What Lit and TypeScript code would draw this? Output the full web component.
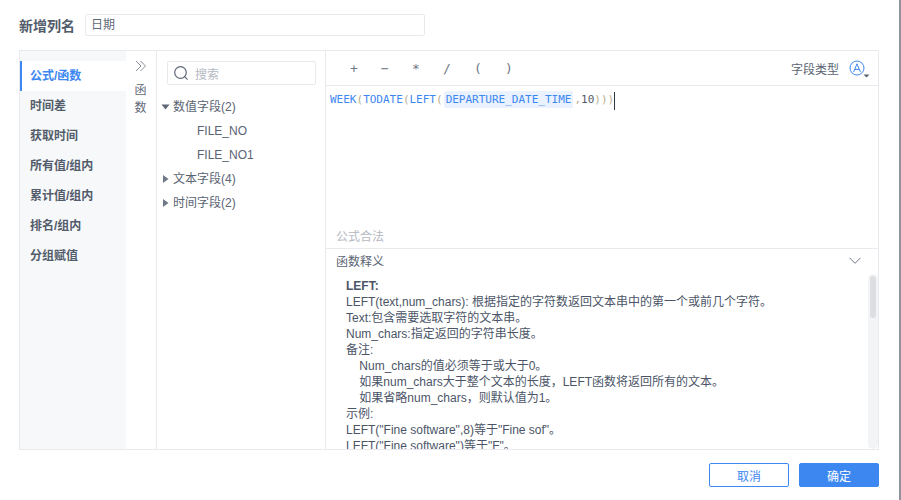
import { LitElement, html, css } from "lit";
import { customElement } from "lit/decorators.js";

@customElement("app-root")
export class AppRoot extends LitElement {
  static styles = css`
    :host {
      display: block;
      width: 901px;
      height: 500px;
      box-sizing: border-box;
      background: #fff;
      border-right: 2px solid #8f9299;
      font-family: "Liberation Sans", "Noto Sans CJK SC", sans-serif;
      font-size: 12px;
      color: #4b5567;
      overflow: hidden;
    }
    .page { display: flex; flex-direction: column; padding: 14px 0 0 19px; }
    .head { display: flex; align-items: center; height: 22px; }
    .head-label { width: 66px; font-size: 14px; font-weight: 700; color: #525c6b; white-space: nowrap; }
    .name-input {
      width: 340px; height: 22px; box-sizing: border-box; padding-left: 5px;
      border: 1px solid #e8eaed; border-radius: 2px; line-height: 20px; color: #5f6877;
    }
    .frame {
      margin-top: 14px; width: 860px; height: 400px; box-sizing: border-box;
      border: 1px solid #e8eaed; display: flex;
    }
    .side { width: 106px; background: #f7f8fa; padding-top: 10px; box-sizing: border-box; flex: none; }
    .side-item {
      height: 30px; line-height: 30px; font-weight: 700; color: #525c6b;
      border-left: 2px solid transparent; box-sizing: border-box; padding-left: 8px;
    }
    .side-item.active { background: #fff; color: #3d87f1; border-left-color: #3d87f1; }
    .rail {
      width: 31px; flex: none; box-sizing: border-box; border-right: 1px solid #e8eaed;
      display: flex; flex-direction: column; align-items: center; color: #5f6877; padding-top: 9px;
    }
    .rail svg { display: block; }
    .rail-text { width: 12px; line-height: 18px; margin-top: 9px; margin-right: 1px; }
    .fields { width: 169px; flex: none; box-sizing: border-box; border-right: 1px solid #e8eaed; padding: 10px 9px 0 10px; }
    .search {
      height: 24px; box-sizing: border-box; border: 1px solid #e8eaed; border-radius: 2px;
      display: flex; align-items: center; gap: 6px; padding-left: 5px; color: #b4b9c2;
    }
    .tree { margin: 10px 0 0 -6px; }
    .row { height: 24px; line-height: 16px; display: flex; align-items: center; gap: 2px; color: #5a6473; }
    .row span { display: block; height: 16px; }
    .row.leaf { padding-left: 36px; }
    .main { flex: 1; min-width: 0; display: flex; flex-direction: column; }
    .toolbar {
      height: 35px; flex: none; box-sizing: border-box; border-bottom: 1px solid #e8eaed;
      display: flex; align-items: center; padding: 0 7px 0 24px;
    }
    .op { width: 31px; font-family: "DejaVu Sans Mono", monospace; font-size: 13px; color: #707987; }
    .type { margin-left: auto; color: #5a6473; }
    .type-icon { margin-left: 10px; width: 22px; height: 20px; }
    .type-icon svg { display: block; margin-top: 2px; }
    .editor {
      flex: 1; min-height: 0; padding: 5px 0 0 4px; box-sizing: border-box;
      font-family: "DejaVu Sans Mono", monospace; font-size: 11px; line-height: 18px; color: #3d87f1;
      white-space: pre; display: flex; align-items: flex-start;
    }
    .paren { color: #b8ad8e; }
    .num { color: #525c6b; }
    .tag { background: #e9f2fe; border-radius: 2px; padding: 2px 2px; margin: 0 1px 0 1px; }
    .caret { display: block; width: 1px; height: 18px; background: #2f3745; margin-top: 1px; }
    .status { height: 26px; flex: none; box-sizing: border-box; padding: 7px 0 0 10px; border-bottom: 1px solid #e8eaed; color: #b4b9c2; line-height: 14px; }
    .doc-head { height: 22px; flex: none; display: flex; align-items: center; justify-content: space-between; padding: 0 17px 0 10px; color: #5a6473; }
    .doc-wrap { height: 178px; flex: none; display: flex; overflow: hidden; }
    .doc { flex: 1; padding: 7px 0 0 20px; line-height: 16px; color: #4b5567; white-space: pre; overflow: hidden; }
    .track { width: 10px; flex: none; margin-top: 3px; background: #f3f4f5; border-radius: 5px; padding: 0 2px; box-sizing: border-box; }
    .thumb { height: 42px; margin-top: 2px; background: #dcdee2; border-radius: 3px; }
    .foot { display: flex; justify-content: flex-end; gap: 10px; margin-top: 13px; width: 860px; }
    .btn { width: 80px; height: 24px; box-sizing: border-box; border: 1px solid #3d87f1; border-radius: 2px; display: flex; align-items: center; justify-content: center; color: #3d87f1; }
    .btn.primary { background: #3d87f1; color: #fff; }
  `;

  render() {
    const tri = (open: boolean) => open
      ? html`<svg width="10" height="10" viewBox="0 0 10 10"><path d="M0.5 2.5h8l-4 5z" fill="#5f6877"/></svg>`
      : html`<svg width="10" height="10" viewBox="0 0 10 10"><path d="M2 1l5.5 4L2 9z" fill="#6f7886"/></svg>`;
    return html`
      <div class="page">
        <div class="head">
          <div class="head-label">新增列名</div>
          <div class="name-input">日期</div>
        </div>
        <div class="frame">
          <div class="side">
            <div class="side-item active">公式/函数</div>
            <div class="side-item">时间差</div>
            <div class="side-item">获取时间</div>
            <div class="side-item">所有值/组内</div>
            <div class="side-item">累计值/组内</div>
            <div class="side-item">排名/组内</div>
            <div class="side-item">分组赋值</div>
          </div>
          <div class="rail">
            <svg width="12" height="12" viewBox="0 0 12 12" fill="none" stroke="#8a919c" stroke-width="1"><path d="M1 1l5 5-5 5M5.5 1l5 5-5 5"/></svg>
            <div class="rail-text">函数</div>
          </div>
          <div class="fields">
            <div class="search">
              <svg width="16" height="16" viewBox="0 0 16 16" fill="none" stroke="#5f6877" stroke-width="1.2"><circle cx="7.5" cy="7.5" r="5.8"/><path d="M11.6 11.6l3 3"/></svg>
              <span>搜索</span>
            </div>
            <div class="tree">
              <div class="row">${tri(true)}<span>数值字段(2)</span></div>
              <div class="row leaf"><span>FILE_NO</span></div>
              <div class="row leaf"><span>FILE_NO1</span></div>
              <div class="row">${tri(false)}<span>文本字段(4)</span></div>
              <div class="row">${tri(false)}<span>时间字段(2)</span></div>
            </div>
          </div>
          <div class="main">
            <div class="toolbar">
              <span class="op">+</span><span class="op">−</span><span class="op">*</span><span class="op">/</span><span class="op">(</span><span class="op">)</span>
              <span class="type">字段类型</span>
              <span class="type-icon">
                <svg width="22" height="20" viewBox="0 0 22 20" fill="none">
                  <circle cx="8" cy="8" r="7" stroke="#3d87f1" stroke-width="1"/>
                  <path d="M4.6 12L8 3.8 11.4 12M5.8 9.4h4.4" stroke="#3d87f1" stroke-width="1"/>
                  <path d="M14.5 14.5h6l-3 3z" fill="#5a6473"/>
                </svg>
              </span>
            </div>
            <div class="editor"><span>WEEK<span class="paren">(</span>TODATE<span class="paren">(</span>LEFT<span class="paren">(</span><span class="tag">DEPARTURE_DATE_TIME</span><span class="paren">,</span><span class="num">10</span><span class="paren">)))</span></span><span class="caret"></span></div>
            <div class="status">公式合法</div>
            <div class="doc-head">
              <span>函数释义</span>
              <svg width="12" height="7" viewBox="0 0 12 7" fill="none" stroke="#6f7886" stroke-width="1"><path d="M0.5 0.8l5.5 5.5 5.5-5.5"/></svg>
            </div>
            <div class="doc-wrap">
              <div class="doc"><b>LEFT:</b>
LEFT(text,num_chars): 根据指定的字符数返回文本串中的第一个或前几个字符。
Text:包含需要选取字符的文本串。
Num_chars:指定返回的字符串长度。
备注:
    Num_chars的值必须等于或大于0。
    如果num_chars大于整个文本的长度，LEFT函数将返回所有的文本。
    如果省略num_chars，则默认值为1。
示例:
LEFT("Fine software",8)等于"Fine sof"。
LEFT("Fine software")等于"F"。</div>
              <div class="track"><div class="thumb"></div></div>
            </div>
          </div>
        </div>
        <div class="foot">
          <div class="btn">取消</div>
          <div class="btn primary">确定</div>
        </div>
      </div>
    `;
  }
}
